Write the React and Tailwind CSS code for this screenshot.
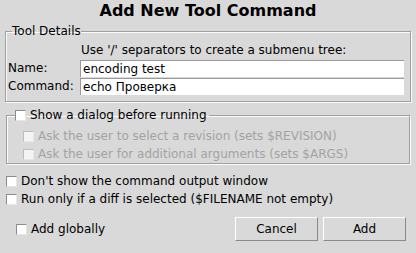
const font = { fontFamily: "'DejaVu Sans', Verdana, sans-serif" }

function Check({ disabled, className = "" }) {
  return (
    <span
      className={
        "inline-block w-[11px] h-[11px] shrink-0 border border-t-[#8c8c8c] border-l-[#8c8c8c] border-r-[#e6e6e6] border-b-[#e6e6e6] " +
        (disabled ? "bg-[#f4f4f4] border-t-[#bdbdbd] border-l-[#bdbdbd] " : "bg-white ") +
        className
      }
    />
  )
}

function Entry({ value }) {
  return (
    <div className="h-[17px] bg-white border-t border-l border-[#9a9a9a] pl-[2px] leading-[16px] text-black">
      {value}
    </div>
  )
}

export default function App() {
  return (
    <div
      style={font}
      className="w-[416px] h-[253px] bg-[#d9d9d9] text-[12px] text-black overflow-hidden flex flex-col"
    >
      {/* Title */}
      <div className="h-[24px] text-center text-[16px] font-bold leading-[22px]">Add New Tool Command</div>

      {/* Tool Details group */}
      <fieldset className="mx-[5px] border border-[#a0a0a0] shadow-[inset_1px_1px_0_#fafafa,1px_1px_0_#fafafa] px-0 pt-[4px] pb-[6px]">
        <legend className="ml-[6px] px-0 leading-[14px]">Tool Details</legend>
        <div className="grid grid-cols-[74px_1fr] gap-y-[1px] pr-[6px]">
          <div />
          <div className="h-[17px] leading-[17px] pl-[1px]">Use '/' separators to create a submenu tree:</div>
          <div className="leading-[17px] pl-[2px]">Name:</div>
          <Entry value="encoding test" />
          <div className="leading-[17px] pl-[2px]">Command:</div>
          <Entry value="echo Проверка" />
        </div>
      </fieldset>

      {/* Dialog group */}
      <fieldset className="mx-[6px] mt-[6px] border border-[#a0a0a0] shadow-[inset_1px_1px_0_#fafafa,1px_1px_0_#fafafa] px-0 pt-[5px] pb-0">
        <legend className="ml-[8px] px-0 leading-[14px] flex items-center gap-[4px] pr-[2px]">
          <Check />
          <span>Show a dialog before running</span>
        </legend>
        <div className="flex flex-col text-[#a3a3a3]">
          <div className="h-[18px] flex items-center gap-[4px] pl-[16px]">
            <Check disabled />
            <span>Ask the user to select a revision (sets $REVISION)</span>
          </div>
          <div className="h-[18px] flex items-center gap-[4px] pl-[16px]">
            <Check disabled />
            <span>Ask the user for additional arguments (sets $ARGS)</span>
          </div>
        </div>
      </fieldset>

      {/* Options */}
      <div className="mt-[8px] flex flex-col pl-[6px]">
        <div className="h-[18px] flex items-center gap-[4px]">
          <Check />
          <span>Don't show the command output window</span>
        </div>
        <div className="h-[18px] flex items-center gap-[4px]">
          <Check />
          <span>Run only if a diff is selected ($FILENAME not empty)</span>
        </div>
      </div>

      {/* Footer */}
      <div className="mt-[9px] h-[24px] flex items-center pl-[16px] pr-[10px]">
        <Check />
        <span className="ml-[4px]">Add globally</span>
        <div className="ml-auto flex gap-[5px]">
          <button className="w-[83px] h-[24px] border border-t-white border-l-white border-r-[#8a8a8a] border-b-[#8a8a8a] bg-[#d9d9d9] text-[12px]">
            Cancel
          </button>
          <button className="w-[83px] h-[24px] border border-t-white border-l-white border-r-[#8a8a8a] border-b-[#8a8a8a] bg-[#d9d9d9] text-[12px]">
            Add
          </button>
        </div>
      </div>
    </div>
  )
}
